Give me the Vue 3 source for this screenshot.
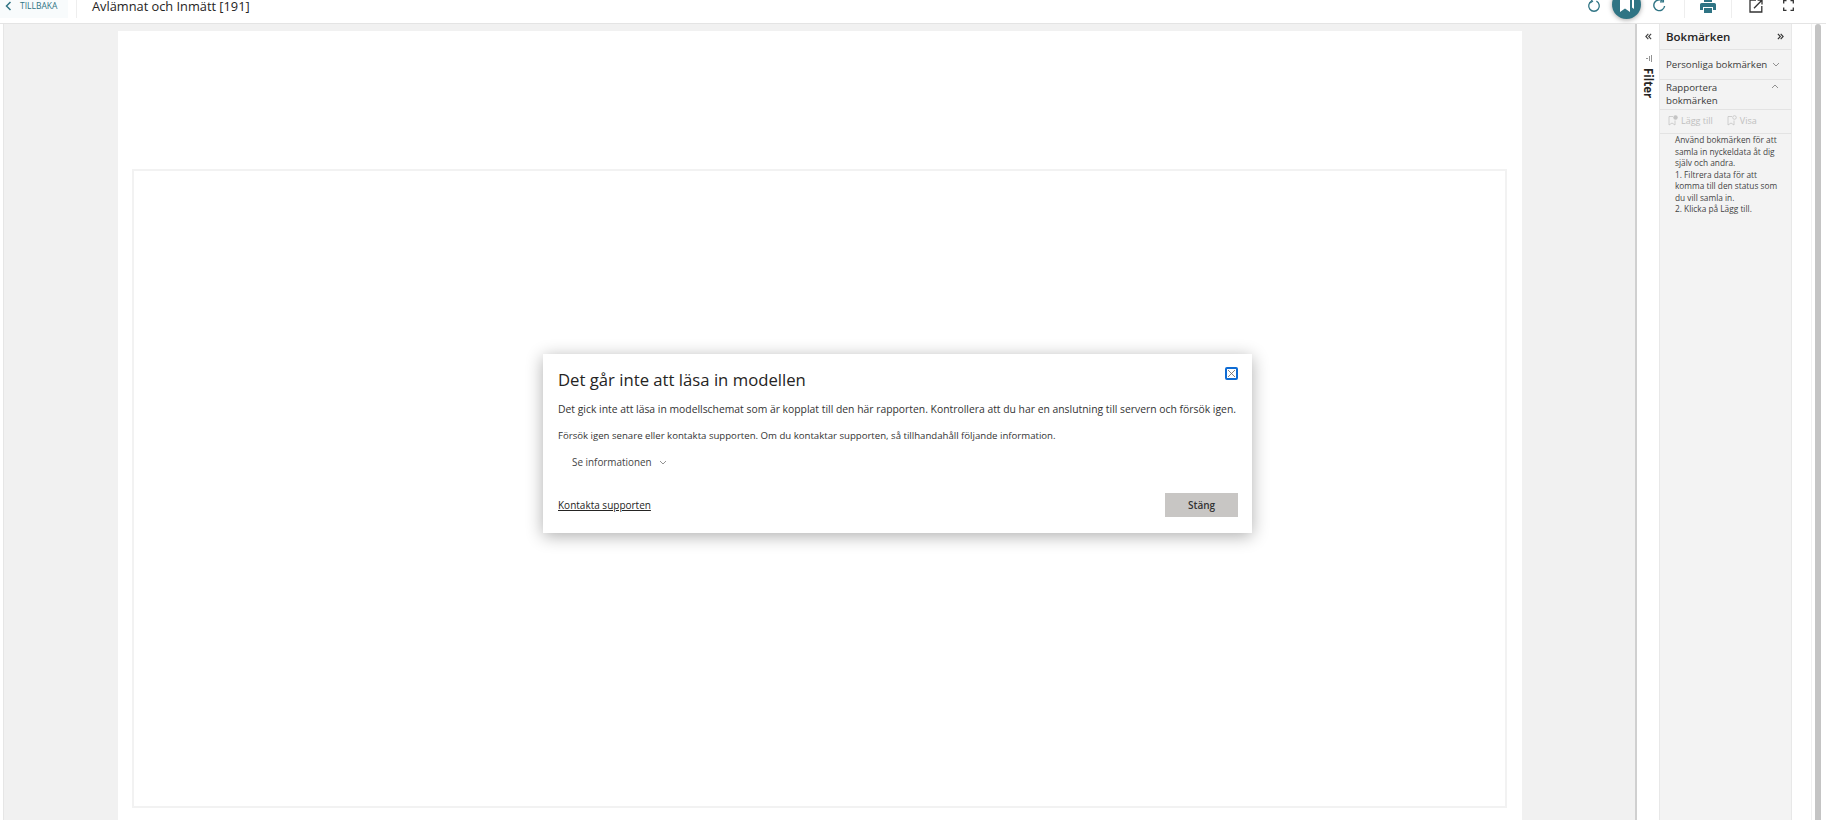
<script setup>
const instruktioner = [
  'Använd bokmärken för att samla in nyckeldata åt dig själv och andra.',
  '1. Filtrera data för att komma till den status som du vill samla in.',
  '2. Klicka på Lägg till.'
]
</script>

<template>
  <div class="app">
    <header class="topbar">
      <a class="back">
        <svg width="7" height="10" viewBox="0 0 7 10"><path d="M5.5 1 1.5 5l4 4" fill="none" stroke="#2f7484" stroke-width="1.5"/></svg>
        <span>TILLBAKA</span>
      </a>
      <span class="sep sep-left"></span>
      <h1>Avlämnat och Inmätt [191]</h1>
      <div class="tools">
        <span class="tool">
          <svg width="14" height="15" viewBox="0 0 14 15"><path d="M4.6 3.2a5.3 5.3 0 1 0 4.8 0" fill="none" stroke="#2f7484" stroke-width="1.3"/><path d="M3.6 .8 5.5 3.4 2.9 5" fill="none" stroke="#2f7484" stroke-width="1.2"/></svg>
        </span>
        <span class="tool">
          <span class="round">
            <svg width="16" height="19" viewBox="0 0 16 19"><path d="M1 0h10v18l-5-3.6L1 18z" fill="#fff"/><path d="M13 0h2v15l-2-1.4z" fill="#fff"/></svg>
          </span>
        </span>
        <span class="tool">
          <svg width="15" height="15" viewBox="0 0 15 15"><path d="M12.6 8a5.4 5.4 0 1 1-2-5" fill="none" stroke="#2f7484" stroke-width="1.4"/><path d="M11.4 .4v3.4H8" fill="none" stroke="#2f7484" stroke-width="1.3"/></svg>
        </span>
        <span class="sep sep-a"></span>
        <span class="tool">
          <svg width="16" height="14" viewBox="0 0 16 14"><path d="M4 0h8v3H4zM1.6 4h12.8A1.6 1.6 0 0 1 16 5.6V11h-3V8H3v3H0V5.600A1.600 1.600 0 0 1 1.600 4zM4 9h8v5H4z" fill="#2f7484"/></svg>
        </span>
        <span class="sep sep-b"></span>
        <span class="tool">
          <svg width="14" height="14" viewBox="0 0 14 14"><path d="M7 1.200H1v11.800h11.800V7" fill="none" stroke="#333" stroke-width="1.300"/><path d="M5 9.200 12.600 1.500M8.600 1h4.400v4.400" fill="none" stroke="#333" stroke-width="1.300"/></svg>
        </span>
        <span class="tool">
          <svg width="11" height="11" viewBox="0 0 11 11"><path d="M.7 3.500V.7h2.800M7.500.7h2.800v2.800M10.300 7.500v2.800H7.500M3.500 10.300H.7V7.500" fill="none" stroke="#333" stroke-width="1.300"/></svg>
        </span>
      </div>
    </header>

    <main class="main">
      <section class="canvas">
        <div class="page">
          <div class="frame"></div>
        </div>
      </section>

      <aside class="filter">
        <svg class="chev" width="7" height="7" viewBox="0 0 8 8"><path d="M3.800 1 1 4l2.800 3M7 1 4.200 4 7 7" fill="none" stroke="#444" stroke-width="1.300"/></svg>
        <svg class="funnel" width="6" height="7" viewBox="0 0 6 7"><path d="M0 3.500h2M3.500 1v5M5.500 0v7" fill="none" stroke="#777" stroke-width=".8"/></svg>
        <span class="filter-label">Filter</span>
      </aside>

      <aside class="bookmarks">
        <div class="bm-head">
          <span>Bokmärken</span>
          <svg width="7" height="7" viewBox="0 0 8 8"><path d="M1 1l2.800 3L1 7M4.200 1 7 4 4.200 7" fill="none" stroke="#333" stroke-width="1.300"/></svg>
        </div>
        <div class="bm-row one">
          <span>Personliga bokmärken</span>
          <svg width="8" height="5" viewBox="0 0 8 5"><path d="m1 1 3 3 3-3" fill="none" stroke="#777" stroke-width=".8"/></svg>
        </div>
        <div class="bm-row two">
          <span>Rapportera bokmärken</span>
          <svg width="8" height="5" viewBox="0 0 8 5"><path d="m1 4 3-3 3 3" fill="none" stroke="#777" stroke-width=".8"/></svg>
        </div>
        <div class="bm-actions">
          <span class="action">
            <svg width="10" height="11" viewBox="0 0 10 11"><path d="M1 1.500h4M1 1.500V10l3-2 3 2V5.500" fill="none" stroke="#c4c4c4" stroke-width=".8"/><circle cx="7.500" cy="2.500" r="2.200" fill="#c4c4c4"/></svg>
            Lägg till
          </span>
          <span class="action">
            <svg width="10" height="11" viewBox="0 0 10 11"><path d="M1 1.500h4M1 1.500V10l3-2 3 2V5.500" fill="none" stroke="#c4c4c4" stroke-width=".8"/><circle cx="7.500" cy="2.500" r="1.800" fill="none" stroke="#c4c4c4" stroke-width=".8"/></svg>
            Visa
          </span>
        </div>
        <div class="bm-help">
          <p v-for="rad in instruktioner" :key="rad">{{ rad }}</p>
        </div>
      </aside>

      <div class="gutter"><div class="thumb"></div></div>
    </main>

    <div class="dialog">
      <div class="dialog-head">
        <h2>Det går inte att läsa in modellen</h2>
        <button class="close">
          <svg width="9" height="9" viewBox="0 0 9 9"><path d="m1 1 7 7M8 1 1 8" stroke="#666" stroke-width=".8"/></svg>
        </button>
      </div>
      <p class="msg first">Det gick inte att läsa in modellschemat som är kopplat till den här rapporten. Kontrollera att du har en anslutning till servern och försök igen.</p>
      <p class="msg second">Försök igen senare eller kontakta supporten. Om du kontaktar supporten, så tillhandahåll följande information.</p>
      <div class="details">
        <span>Se informationen</span>
        <svg width="8" height="5" viewBox="0 0 8 5"><path d="m1 1 3 3 3-3" fill="none" stroke="#777" stroke-width=".8"/></svg>
      </div>
      <div class="dialog-foot">
        <a class="support">Kontakta supporten</a>
        <button class="stang">Stäng</button>
      </div>
    </div>
  </div>
</template>

<style scoped>
.app { position: relative; width: 1826px; height: 820px; overflow: hidden; display: flex; flex-direction: column; background: #fff; font-family: "Open Sans", "Noto Sans", sans-serif; color: #252423; }

.topbar { height: 24px; padding-bottom: 12px; box-sizing: border-box; display: flex; align-items: center; border-bottom: 1px solid #e4e4e4; flex: none; }
.back { width: 68px; height: 24px; flex: none; display: flex; align-items: center; gap: 8px; padding-left: 5px; box-sizing: border-box; background: #f8fbfc; font-size: 8.500px; color: #2f7484; }
.sep { width: 1px; height: 24px; background: #eee; flex: none; }
.sep-left { margin: 0 15px 0 8px; }
.sep-a { margin: 0 6.500px 0 7.500px; }
.sep-b { margin: 0 7.500px 0 6.500px; }
h1 { margin: 0; font-size: 12.800px; font-weight: 500; color: #252423; white-space: nowrap; }
.tools { margin-left: auto; padding-right: 21px; display: flex; align-items: center; }
.tool { width: 33px; height: 14px; display: flex; align-items: center; justify-content: center; flex: none; }
.round { width: 29px; height: 29px; flex: none; margin-bottom: 3px; border-radius: 50%; background: #2f7484; box-shadow: 0 1px 5px rgba(0, 0, 0, .35); display: flex; align-items: flex-start; justify-content: center; overflow: hidden; }
.round svg { margin-top: 4px; }

.main { flex: 1; min-height: 0; display: flex; padding-left: 3px; }
.canvas { width: 1634px; flex: none; box-sizing: border-box; background: #f1f1f1; border-left: 1px solid #e6e6e6; border-right: 2px solid #d0d0d0; padding: 7px 0 0 114px; overflow: hidden; }
.page { width: 1404px; height: 900px; background: #fff; box-sizing: border-box; padding: 138px 15px 0 14px; }
.frame { height: 639px; box-sizing: border-box; border: 2px solid #f2f2f2; }

.filter { width: 22px; flex: none; background: #fff; display: flex; flex-direction: column; align-items: center; padding-top: 9px; box-sizing: border-box; }
.funnel { margin-top: 15px; margin-left: 2px; }
.filter-label { writing-mode: vertical-rl; font-size: 11.500px; font-weight: 700; margin-top: 6px; color: #252423; }

.bookmarks { width: 133px; flex: none; box-sizing: border-box; background: #f3f3f3; border-left: 1px solid #e8e8e8; border-right: 1px solid #e8e8e8; }
.bm-head { height: 25px; display: flex; align-items: center; justify-content: space-between; padding: 0 7px 0 6px; border-bottom: 1px solid #e3e3e3; font-size: 11.500px; font-weight: 600; }
.bm-row { display: flex; justify-content: space-between; padding: 0 12px 0 6px; border-bottom: 1px solid #e3e3e3; font-size: 9.700px; line-height: 13px; color: #3a3a3a; }
.bm-row.one { height: 29px; align-items: center; padding-right: 11px; }
.bm-row.one span { white-space: nowrap; }
.bm-row.two { height: 30px; padding-top: 1px; box-sizing: border-box; }
.bm-row.two span { width: 80px; }
.bm-row.two svg { margin-top: 3px; }
.bm-actions { height: 21px; display: flex; align-items: center; gap: 14px; padding-left: 8px; padding-bottom: 2px; border-bottom: 1px solid #e3e3e3; }
.action { display: flex; align-items: center; gap: 3px; font-size: 9px; color: #c0c0c0; }
.bm-help { padding: 0 6px 0 15px; font-size: 8.300px; line-height: 11.500px; color: #444; }
.bm-help p { margin: 0; }

.gutter { width: 15px; margin-left: 19px; flex: none; padding-left: 3px; box-sizing: border-box; border-left: 1px solid #f1f1f1; }
.thumb { width: 6px; height: 100%; background: #c4c4c4; border-radius: 3px 3px 0 0; }

.dialog { position: absolute; left: 543px; top: 354px; width: 709px; height: 179px; box-sizing: border-box; padding: 0 14px 0 15px; background: #fff; box-shadow: 0 3px 16px rgba(0, 0, 0, .32); display: flex; flex-direction: column; }
.dialog-head { display: flex; justify-content: space-between; padding-top: 14px; height: 48px; box-sizing: border-box; }
h2 { margin: 0; font-size: 16.700px; font-weight: 400; line-height: 24px; color: #252423; }
.close { width: 13px; height: 13px; padding: 0; margin-top: -1px; background: #fff; border: 2px solid #0f6cd4; border-radius: 2px; display: flex; align-items: center; justify-content: center; }
.msg { margin: 0; line-height: 14px; color: #333; white-space: nowrap; }
.first { font-size: 10.370px; }
.second { margin-top: 13px; font-size: 9.620px; }
.details { display: flex; align-items: center; gap: 7px; padding-left: 14px; margin-top: 12px; font-size: 9.900px; line-height: 14px; color: #444; }
.dialog-foot { margin-top: auto; padding-bottom: 16px; display: flex; justify-content: space-between; align-items: center; }
.support { font-size: 10px; text-decoration: underline; color: #252423; }
.stang { width: 73px; height: 24px; padding: 0; border: 0; background: #c8c6c4; font-family: inherit; font-size: 10px; font-weight: 600; color: #333; }
</style>

<style>
html, body { overflow: hidden; }
</style>
